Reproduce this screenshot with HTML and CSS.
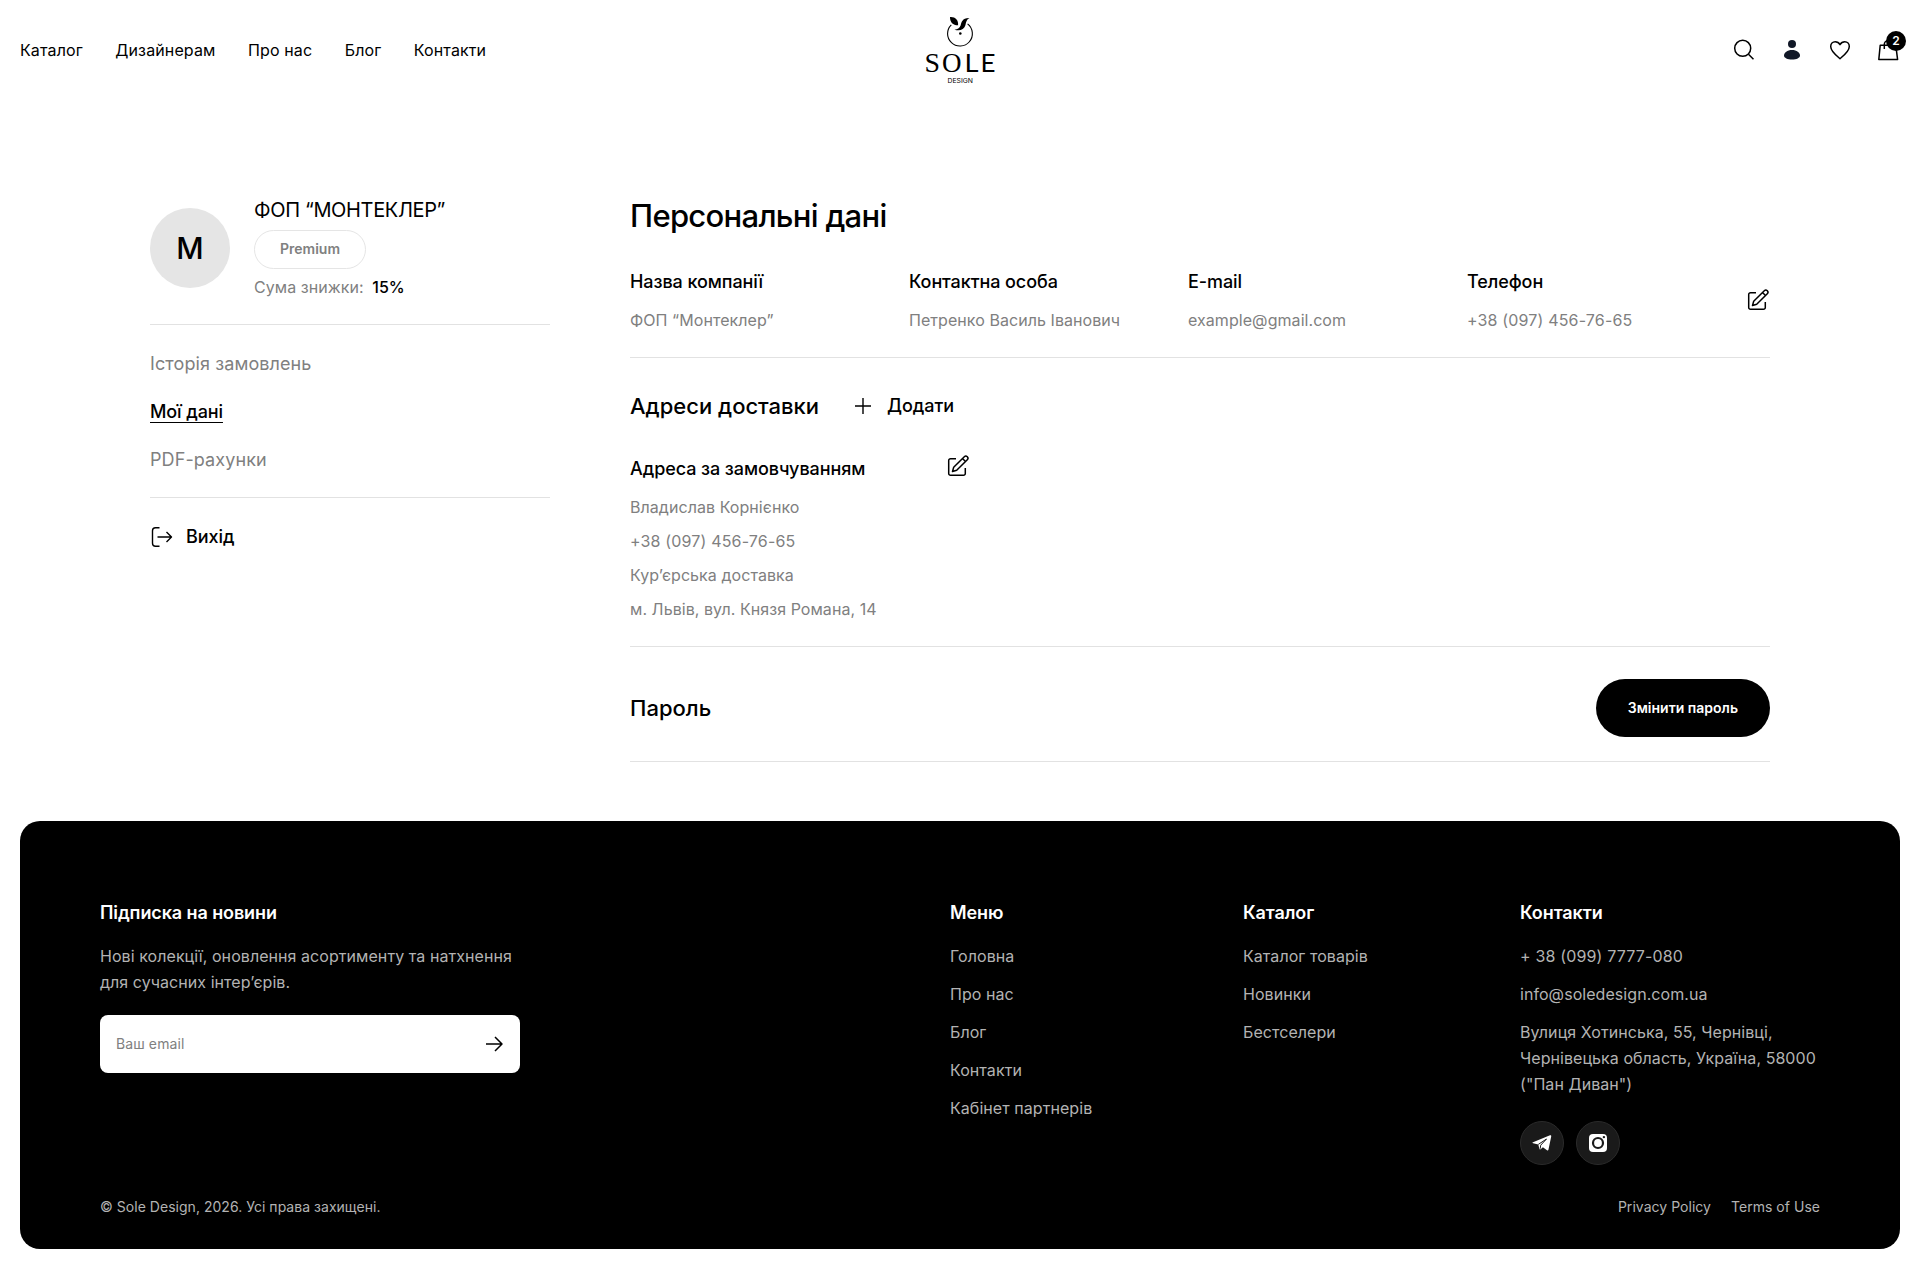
FILE: index.html
```html
<!DOCTYPE html>
<html lang="uk">
<head>
    <meta charset="UTF-8">
    <meta name="viewport" content="width=device-width, initial-scale=1.0">
    <title>Персональні дані</title>
    <link rel="stylesheet" href="styles.css">
</head>
<body>
    <header class="header">
        <nav class="nav">
            <a href="#">Каталог</a>
            <a href="#">Дизайнерам</a>
            <a href="#">Про нас</a>
            <a href="#">Блог</a>
            <a href="#">Контакти</a>
        </nav>

        <a href="#" class="logo">
            <svg width="72" height="72" viewBox="0 0 72 72">
                <path d="M27.3 10.8A12.4 12.4 0 1 0 43.6 9.9" fill="none" stroke="#000" stroke-width="1.1"/>
                <path d="M26 3C31 2.600 34.500 5.500 34.100 11.300C29 11.400 26 8.500 26 3Z"/>
                <path d="M45.500 4C38 3.800 37.500 8.500 36.600 11.500C35.600 14.300 33.500 15.500 30.500 15.700C36 17.300 40 15.500 41.300 11.500C42.300 8.500 42 6 45.500 4Z"/>
                <circle cx="36.300" cy="19.500" r="1.300"/>
                <text class="logo-serif" x="0.500" y="57.800" textLength="15.500" lengthAdjust="spacingAndGlyphs">S</text>
                <text class="logo-serif" x="18" y="57.800">O</text>
                <text class="logo-sans" x="40.500" y="57.800" textLength="14" lengthAdjust="spacingAndGlyphs">L</text>
                <text class="logo-sans" x="56.500" y="57.800" textLength="15" lengthAdjust="spacingAndGlyphs">E</text>
                <text class="logo-sub" x="23.500" y="69" textLength="25.500" lengthAdjust="spacingAndGlyphs">DESIGN</text>
            </svg>
        </a>

        <div class="header-icons">
            <a href="#">
                <svg class="icon" viewBox="0 0 24 24"><circle cx="10.700" cy="10.300" r="8"/><path d="M16.500 16.200l5 5"/></svg>
            </a>
            <a href="#">
                <svg class="icon icon-user" viewBox="0 0 24 24"><circle cx="12" cy="6" r="4"/><path d="M4 17.500c0-3 3.300-5.500 8-5.500s8 2.500 8 5.500c0 2.500-3.500 4-8 4s-8-1.500-8-4z"/></svg>
            </a>
            <a href="#">
                <svg class="icon" viewBox="0 0 24 24"><path d="M12 20.700C8 17.500 2.700 13.500 2.700 8.600C2.700 5.700 4.700 3.700 7.200 3.700C9.300 3.700 11 4.800 12 6.600C13 4.800 14.700 3.700 16.800 3.700C19.300 3.700 21.300 5.700 21.300 8.600C21.300 13.500 16 17.500 12 20.700Z"/></svg>
            </a>
            <a href="#" class="cart">
                <svg class="icon" viewBox="0 0 24 24"><path d="M4.200 7.300h15.600l1.800 14.300H2.800z"/><path d="M8.300 11V6.500a3.700 3.700 0 0 1 7.400 0V11"/></svg>
                <span class="badge">2</span>
            </a>
        </div>
    </header>

    <main class="account">
        <aside class="sidebar">
            <div class="profile">
                <div class="avatar">M</div>
                <div class="profile-info">
                    <div class="profile-name">ФОП “МОНТЕКЛЕР”</div>
                    <div class="status">Premium</div>
                    <div class="discount">Сума знижки: <span>15%</span></div>
                </div>
            </div>
            <nav class="side-menu">
                <a href="#">Історія замовлень</a>
                <a href="#" class="active">Мої дані</a>
                <a href="#">PDF-рахунки</a>
            </nav>
            <a href="#" class="logout">
                <svg class="icon icon-thin" viewBox="0 0 24 24"><path d="M9.500 2.700H5.500a3 3 0 0 0-3 3v12.600a3 3 0 0 0 3 3h4"/><path d="M7.500 12h14M16.500 7l5 5-5 5"/></svg>
                Вихід
            </a>
        </aside>

        <div class="content">
            <h1>Персональні дані</h1>
            <section class="personal">
                <div class="field">
                    <h3>Назва компанії</h3>
                    <p>ФОП “Монтеклер”</p>
                </div>
                <div class="field">
                    <h3>Контактна особа</h3>
                    <p>Петренко Василь Іванович</p>
                </div>
                <div class="field">
                    <h3>E-mail</h3>
                    <p>example@gmail.com</p>
                </div>
                <div class="field">
                    <h3>Телефон</h3>
                    <p class="phone">+38 (097) 456-76-65</p>
                </div>
                <svg class="icon" viewBox="0 0 24 24"><path d="M10 4.700H4.500a1.800 1.800 0 0 0-1.800 1.800v13a1.800 1.800 0 0 0 1.800 1.800h13a1.800 1.800 0 0 0 1.800-1.800V14"/><path d="M6.500 17.500l1.200-4.200L18.300 2.700a2.100 2.100 0 0 1 3 3L10.700 16.300zM16.500 4.500l3 3"/></svg>
            </section>

            <section class="addresses">
                <div class="addresses-head">
                    <h2>Адреси доставки</h2>
                    <a href="#" class="add">
                        <svg class="icon icon-thin" viewBox="0 0 24 24"><path d="M12 4v16M4 12h16"/></svg>
                        Додати
                    </a>
                </div>
                <div class="address">
                    <div class="address-title">
                        <h3>Адреса за замовчуванням</h3>
                        <svg class="icon" viewBox="0 0 24 24"><path d="M10 4.700H4.500a1.800 1.800 0 0 0-1.800 1.800v13a1.800 1.800 0 0 0 1.800 1.800h13a1.800 1.800 0 0 0 1.800-1.800V14"/><path d="M6.500 17.500l1.200-4.200L18.300 2.700a2.100 2.100 0 0 1 3 3L10.700 16.300zM16.500 4.500l3 3"/></svg>
                    </div>
                    <p>Владислав Корнієнко</p>
                    <p class="phone">+38 (097) 456-76-65</p>
                    <p>Кур’єрська доставка</p>
                    <p>м. Львів, вул. Князя Романа, 14</p>
                </div>
            </section>

            <section class="password">
                <h2>Пароль</h2>
                <button type="button">Змінити пароль</button>
            </section>
        </div>
    </main>

    <footer class="footer">
        <div class="footer-top">
            <div class="subscribe">
                <h4>Підписка на новини</h4>
                <p>Нові колекції, оновлення асортименту та натхнення для сучасних інтер’єрів.</p>
                <form class="subscribe-form">
                    <input type="email" placeholder="Ваш email">
                    <svg class="icon" viewBox="0 0 24 24"><path d="M4 12h16M13 5l7 7-7 7"/></svg>
                </form>
            </div>
            <div class="footer-col col-menu">
                <h4>Меню</h4>
                <a href="#">Головна</a>
                <a href="#">Про нас</a>
                <a href="#">Блог</a>
                <a href="#">Контакти</a>
                <a href="#">Кабінет партнерів</a>
            </div>
            <div class="footer-col col-catalog">
                <h4>Каталог</h4>
                <a href="#">Каталог товарів</a>
                <a href="#">Новинки</a>
                <a href="#">Бестселери</a>
            </div>
            <div class="footer-col col-contacts">
                <h4>Контакти</h4>
                <a href="#" class="phone">+ 38 (099) 7777-080</a>
                <a href="#">info@soledesign.com.ua</a>
                <a href="#">Вулиця Хотинська, 55, Чернівці, Чернівецька область, Україна, 58000 ("Пан Диван")</a>
                <div class="socials">
                    <span class="social">
                        <svg width="20" height="20" viewBox="0 0 20 20"><path fill="#fff" d="M1 9.300L18 2.300c.800-.300 1.400.200 1.200 1.200l-2.700 13c-.200.900-.800 1.100-1.500.700l-4.100-3-2 1.900c-.800.700-1.400.500-1.600-.500L6.300 11.400 1.100 10.300C.200 10 .200 9.600 1 9.300z"/><path d="M6.300 11.400L14.500 6 8.700 12.200 8.200 15.700" fill="none" stroke="#1a1a1a" stroke-width="1"/></svg>
                    </span>
                    <span class="social">
                        <svg width="20" height="20" viewBox="0 0 20 20"><rect x="1" y="1" width="18" height="18" rx="4" fill="#fff"/><circle cx="10" cy="10" r="5" fill="none" stroke="#1a1a1a" stroke-width="2.200"/><circle cx="15.900" cy="4.100" r="1.200" fill="#1a1a1a"/></svg>
                    </span>
                </div>
            </div>
        </div>
        <div class="footer-bottom">
            <span>© Sole Design, 2026. Усі права захищені.</span>
            <div class="policies">
                <a href="#">Privacy Policy</a>
                <a href="#">Terms of Use</a>
            </div>
        </div>
    </footer>
</body>
</html>
```
FILE: styles.css
```css
* {
    box-sizing: border-box;
}
body {
    font-family: 'Inter', sans-serif;
    font-size: 16px;
    line-height: 20px;
    letter-spacing: 0.06px;
    color: #000;
    background-color: #fff;
    margin: 0;
}
h1, h2, h3, h4, p {
    margin: 0;
}
a {
    color: inherit;
    text-decoration: none;
}
svg {
    display: block;
    flex-shrink: 0;
}
.icon {
    width: 24px;
    height: 24px;
    fill: none;
    stroke: #000;
    stroke-width: 1.5;
    stroke-linejoin: round;
}
.icon-thin {
    stroke-width: 1.4;
}
.icon-user {
    fill: #111827;
    stroke: none;
}
.phone {
    letter-spacing: 0.16px;
}

/* Header */
.header {
    display: grid;
    grid-template-columns: 1fr auto 1fr;
    align-items: center;
    height: 100px;
    padding: 0 20px;
}
.nav {
    display: flex;
    gap: 32.5px;
    letter-spacing: 0.12px;
}
.logo-serif {
    font-family: 'Liberation Serif', serif;
    font-size: 27px;
    letter-spacing: 0;
}
.logo-sans {
    font-family: 'Lato', sans-serif;
    font-size: 25px;
    letter-spacing: 0;
}
.logo-sub {
    font-size: 6.5px;
    letter-spacing: 0;
}
.header-icons {
    display: flex;
    justify-content: flex-end;
    gap: 24px;
}
.cart {
    position: relative;
}
.badge {
    position: absolute;
    top: -7px;
    right: -6px;
    width: 20px;
    height: 20px;
    border-radius: 50%;
    background-color: #000;
    color: #fff;
    font-size: 12px;
    font-weight: 600;
    text-align: center;
}

/* Account */
.account {
    display: flex;
    gap: 80px;
    width: 1620px;
    height: 721px;
    margin: 0 auto;
    padding-top: 98px;
}
.sidebar {
    width: 400px;
}
.profile {
    display: flex;
    align-items: center;
    gap: 24px;
    padding-bottom: 27px;
    border-bottom: 1px solid #e2e2e2;
}
.avatar {
    width: 80px;
    height: 80px;
    border-radius: 50%;
    background-color: #e5e5e5;
    font-size: 30px;
    font-weight: 500;
    line-height: 80px;
    text-align: center;
}
.profile-info {
    display: flex;
    flex-direction: column;
    align-items: flex-start;
    gap: 8px;
}
.profile-name {
    font-size: 20px;
    line-height: 24px;
    letter-spacing: -0.35px;
}
.status {
    height: 39px;
    padding: 0 25px;
    border: 1px solid #e5e5e5;
    border-radius: 20px;
    color: #808080;
    font-size: 14px;
    font-weight: 600;
    line-height: 36px;
    letter-spacing: 0;
}
.discount {
    color: #808080;
}
.discount span {
    margin-left: 4px;
    color: #000;
    font-weight: 500;
    letter-spacing: 0;
}
.side-menu {
    display: flex;
    flex-direction: column;
    align-items: flex-start;
    gap: 24px;
    padding: 27px 0 25px;
    border-bottom: 1px solid #e2e2e2;
    color: #808080;
    font-size: 18px;
    line-height: 24px;
    letter-spacing: 0.1px;
}
.side-menu .active {
    color: #000;
    font-weight: 500;
    letter-spacing: -0.1px;
    text-decoration: underline 1px;
    text-underline-offset: 4px;
    text-decoration-skip-ink: none;
}
.logout {
    display: flex;
    gap: 12px;
    padding-top: 27px;
    font-size: 18px;
    font-weight: 500;
    line-height: 24px;
    letter-spacing: -0.05px;
}

.content {
    width: 1140px;
}
h1 {
    font-size: 31px;
    font-weight: 500;
    line-height: 36px;
    letter-spacing: -0.7px;
}
h2 {
    font-size: 22px;
    font-weight: 500;
    line-height: 28px;
    letter-spacing: 0;
}
h3 {
    font-size: 18px;
    font-weight: 500;
    line-height: 24px;
    letter-spacing: -0.08px;
}
.content p {
    color: #808080;
}
.personal {
    display: flex;
    align-items: center;
    padding: 36px 0 27px;
    border-bottom: 1px solid #e2e2e2;
}
.field {
    flex: 1;
}
.field p {
    margin-top: 16px;
}
.addresses {
    padding: 34px 0 27px;
    border-bottom: 1px solid #e2e2e2;
}
.addresses-head {
    display: flex;
    align-items: center;
    gap: 32px;
}
.add {
    display: flex;
    gap: 12px;
    font-size: 18px;
    font-weight: 500;
    line-height: 24px;
    letter-spacing: -0.08px;
}
.address {
    display: flex;
    flex-direction: column;
    gap: 14px;
    width: 340px;
    margin-top: 34px;
}
.address-title {
    display: flex;
    justify-content: space-between;
    margin-bottom: 2px;
}
.address-title h3 {
    padding-top: 3px;
}
.password {
    display: flex;
    align-items: center;
    justify-content: space-between;
    padding: 32px 0 24px;
    border-bottom: 1px solid #e2e2e2;
}
button {
    height: 58px;
    padding: 0 32px 1px;
    background-color: #000;
    color: #fff;
    border: none;
    border-radius: 29px;
    font-family: inherit;
    font-size: 14px;
    font-weight: 600;
    cursor: pointer;
}

/* Footer */
.footer {
    height: 428px;
    margin: 0 20px 20px;
    padding: 80px 80px 0;
    border-radius: 20px;
    background-color: #000;
    color: #b3b3b3;
}
.footer-top {
    display: flex;
    height: 296px;
    line-height: 26px;
}
.footer h4 {
    margin-bottom: 18px;
    color: #fff;
    font-size: 18px;
    font-weight: 600;
    line-height: 24px;
    letter-spacing: -0.1px;
}
.subscribe {
    width: 850px;
}
.subscribe p {
    width: 420px;
}
.subscribe-form {
    display: flex;
    align-items: center;
    width: 420px;
    height: 58px;
    margin-top: 20px;
    padding: 0 14px 0 16px;
    border-radius: 8px;
    background-color: #fff;
}
.subscribe-form input {
    flex: 1;
    padding: 0 0 2px;
    border: none;
    outline: none;
    font-family: inherit;
    font-size: 14px;
    letter-spacing: 0.1px;
}
.subscribe-form input::placeholder {
    color: #808080;
}
.footer-col {
    display: flex;
    flex-direction: column;
}
.footer-col a {
    margin-bottom: 12px;
}
.col-menu {
    width: 293px;
}
.col-catalog {
    width: 277px;
}
.col-contacts {
    width: 300px;
}
.socials {
    display: flex;
    gap: 12px;
    margin-top: 12px;
}
.social {
    display: flex;
    align-items: center;
    justify-content: center;
    width: 44px;
    height: 44px;
    border: 1px solid #2b2b2b;
    border-radius: 50%;
    background-color: #1a1a1a;
}
.footer-bottom {
    display: flex;
    justify-content: space-between;
    font-size: 14px;
    letter-spacing: 0.03px;
}
.policies {
    display: flex;
    gap: 20px;
}
```
